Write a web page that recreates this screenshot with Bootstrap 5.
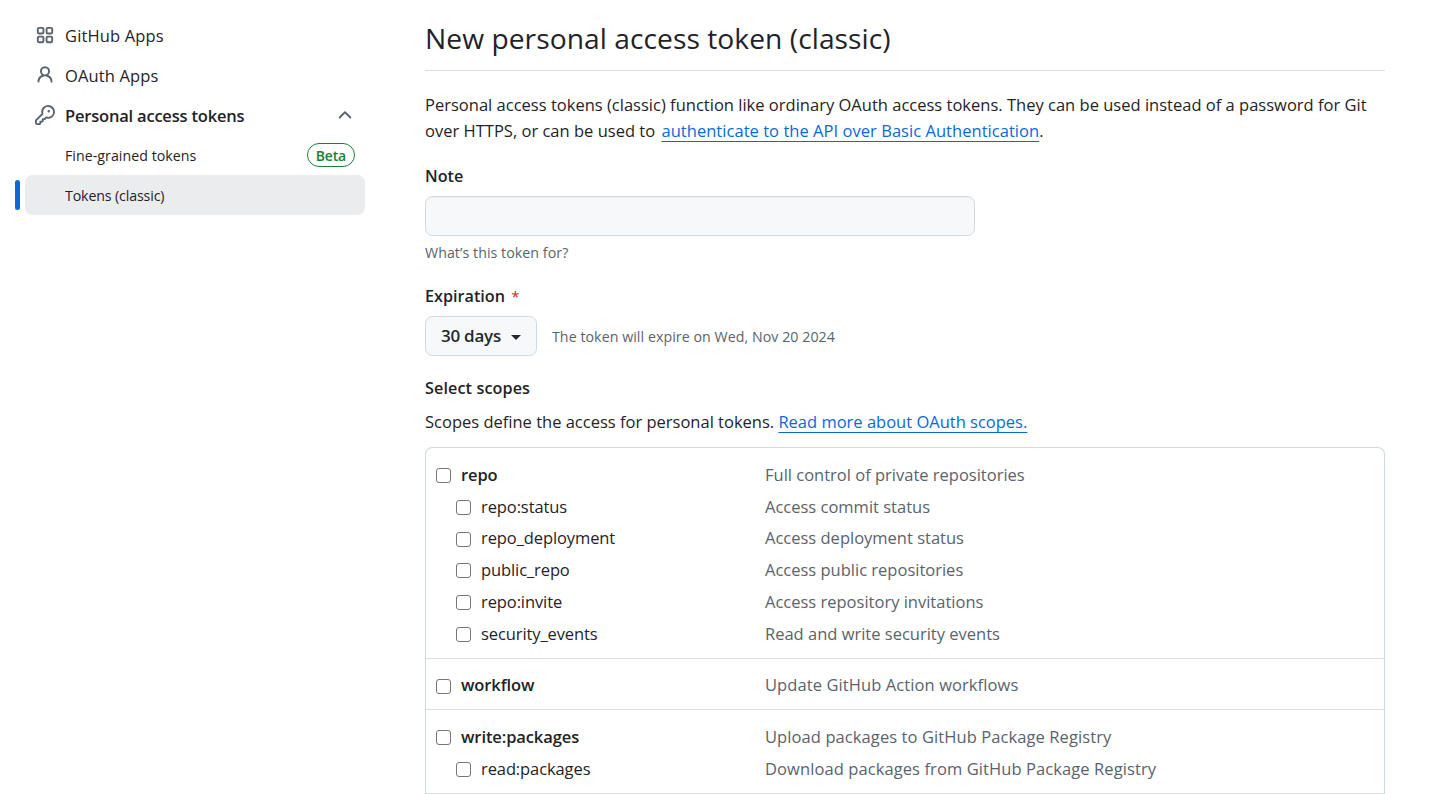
<!DOCTYPE html>
<html lang="en">
<head>
    <meta charset="UTF-8">
    <meta name="viewport" content="width=device-width, initial-scale=1.0">
    <title>New personal access token (classic)</title>
    <!-- Bootstrap 5 CDN -->
    <link href="https://cdn.jsdelivr.net/npm/bootstrap@5.3.0/dist/css/bootstrap.min.css" rel="stylesheet">
    <style>
        body {
            background-color: #ffffff;
            color: #1f2328;
            font-family: "Open Sans", "Noto Sans", sans-serif;
            font-size: 16.5px;
            line-height: 26.25px;
            overflow: hidden;
        }

        .page-wrap {
            padding: 15px 50px 0 25px;
            gap: 60px;
        }

        /* sidebar */
        .side-menu {
            width: 340px;
        }

        .side-menu .nav-link {
            height: 40px;
            padding: 0 10px;
            color: #1f2328;
            border-radius: 7.5px;
            letter-spacing: 0.14px;
        }

        .side-menu .nav-link > span:not(.beta-label) {
            padding-top: 2px;
        }

        .side-menu .fw-semibold {
            letter-spacing: -0.2px;
        }

        .side-menu svg {
            width: 20px;
            height: 20px;
            fill: #59636e;
        }

        .side-menu .nav-link > svg:first-child {
            margin-right: 10px;
        }

        .side-menu .sub-link {
            padding-left: 40px;
            font-size: 14.2px;
            letter-spacing: 0.04px;
        }

        .side-menu .nav-link.active {
            background-color: #ebecee;
            letter-spacing: -0.13px;
        }

        .side-menu .nav-link.active::before {
            content: "";
            position: absolute;
            left: -10px;
            top: 5px;
            width: 5px;
            height: 30px;
            border-radius: 7.5px;
            background-color: #0969da;
        }

        .side-menu .beta-label {
            height: 24px;
            padding: 0 8px;
            border: 1px solid #1a7f37;
            border-radius: 12px;
            color: #1a7f37;
            font-size: 14px;
            line-height: 23px;
        }

        /* main form */
        .page-title {
            height: 56px;
            margin-bottom: 21px;
            border-bottom: 1px solid #d9dee3;
            font-size: 28.2px;
            font-weight: 400;
            line-height: 46px;
            letter-spacing: 0.05px;
        }

        .intro-text {
            letter-spacing: 0.01px;
        }

        .text-link {
            color: #0969da;
            text-decoration: underline;
            text-underline-offset: 4px;
            text-decoration-thickness: 1px;
        }

        .intro-text .text-link {
            margin-left: 2px;
            letter-spacing: 0.04px;
        }

        .field-label {
            margin-bottom: 7px;
            font-weight: 600;
            font-size: 16.2px;
        }

        .note-label {
            margin-top: 18px;
        }

        .expire-label {
            margin-top: 17px;
        }

        .scopes-label {
            margin-top: 19px;
            letter-spacing: 0.1px;
        }

        .required-star {
            margin-left: 2px;
            color: #d1242f;
            font-size: 15px;
            font-weight: 400;
        }

        .note-input {
            width: 550px;
            height: 40px;
            margin-bottom: 4px;
            background-color: #f6f8fa;
            border: 1px solid #d1d9e0;
            border-radius: 7.5px;
            box-shadow: inset 0 1px 0 rgba(31, 35, 40, 0.04);
        }

        .hint-text {
            font-size: 14.2px;
            letter-spacing: 0.06px;
            color: #59636e;
        }

        .expire-hint {
            margin-left: 15px;
            padding-top: 2px;
        }

        .expire-btn {
            width: 112px;
            height: 40px;
            padding: 0 15px 2px;
            background-color: #f6f8fa;
            border: 1px solid #d1d9e0;
            border-radius: 7.5px;
            color: #25292e;
            font-size: 17px;
            font-weight: 600;
            letter-spacing: -0.25px;
        }

        .expire-btn.dropdown-toggle::after {
            margin-top: 4px;
        }

        .scope-box {
            margin-top: 12.3px;
            border: 1px solid #d1d9e0;
            border-bottom: 0;
            border-radius: 7.5px 7.5px 0 0;
        }

        .scope-group {
            padding: 11px 10px 7.8px;
            border-bottom: 1px solid #d9dee3;
        }

        .scope-row {
            height: 31.8px;
        }

        .scope-name {
            width: 329px;
            letter-spacing: -0.1px;
        }

        .scope-row.child .scope-name {
            padding-left: 20px;
        }

        .scope-name .form-check-input {
            width: 15px;
            height: 15px;
            margin: 1px 10px 0 0;
            border: 1px solid #767676;
            border-radius: 3px;
        }

        .scope-desc {
            color: #59636e;
            letter-spacing: 0.09px;
        }

        .scope-group:first-child .scope-desc {
            letter-spacing: 0;
        }
    </style>
</head>
<body>
    <div class="page-wrap d-flex">
        <!-- Sidebar -->
        <nav class="side-menu nav flex-column flex-nowrap flex-shrink-0">
            <a class="nav-link d-flex align-items-center" href="#">
                <svg viewBox="0 0 16 16"><g fill="none" stroke="#59636e" stroke-width="1.5"><rect x="2.25" y="2.25" width="4.5" height="4.5" rx="1"/><rect x="9.25" y="2.25" width="4.5" height="4.5" rx="1"/><rect x="2.25" y="9.25" width="4.5" height="4.5" rx="1"/><rect x="9.25" y="9.25" width="4.5" height="4.5" rx="1"/></g></svg>
                <span>GitHub Apps</span>
            </a>
            <a class="nav-link d-flex align-items-center" href="#">
                <svg viewBox="0 0 16 16"><path d="M10.561 8.073a6.005 6.005 0 0 1 3.432 5.142.75.75 0 1 1-1.498.07 4.5 4.5 0 0 0-8.99 0 .75.75 0 0 1-1.498-.07 6.004 6.004 0 0 1 3.431-5.142 3.999 3.999 0 1 1 5.123 0ZM10.5 5a2.5 2.5 0 1 0-5 0 2.5 2.5 0 0 0 5 0Z"/></svg>
                <span>OAuth Apps</span>
            </a>
            <a class="nav-link d-flex align-items-center" href="#">
                <svg viewBox="0 0 16 16"><path d="M10.5 0a5.499 5.499 0 1 1-1.288 10.848l-.932.932a.749.749 0 0 1-.53.22H7v.75a.749.749 0 0 1-.22.53l-.5.5a.749.749 0 0 1-.53.22H5v.75a.749.749 0 0 1-.22.53l-.5.5a.749.749 0 0 1-.53.22h-2A1.75 1.75 0 0 1 0 14.25v-2c0-.199.079-.389.22-.53l4.932-4.932A5.5 5.5 0 0 1 10.5 0Zm-4 5.5c-.001.431.069.86.205 1.269a.75.75 0 0 1-.181.768L1.5 12.56v1.69c0 .138.112.25.25.25h1.69l.06-.06v-1.19a.75.75 0 0 1 .75-.75h1.19l.06-.06v-1.19a.75.75 0 0 1 .75-.75h1.19l1.023-1.025a.75.75 0 0 1 .768-.18A4 4 0 1 0 6.5 5.5ZM11 6a1 1 0 1 1 0-2 1 1 0 0 1 0 2Z"/></svg>
                <span class="fw-semibold">Personal access tokens</span>
                <svg class="ms-auto" viewBox="0 0 16 16"><path d="M3.22 10.53a.749.749 0 0 1 0-1.06l4.25-4.25a.749.749 0 0 1 1.06 0l4.25 4.25a.749.749 0 1 1-1.06 1.06L8 6.811 4.28 10.53a.749.749 0 0 1-1.06 0Z"/></svg>
            </a>
            <a class="nav-link sub-link d-flex align-items-center" href="#">
                <span>Fine-grained tokens</span>
                <span class="beta-label fw-semibold ms-auto">Beta</span>
            </a>
            <a class="nav-link sub-link active position-relative d-flex align-items-center" href="#">
                <span>Tokens (classic)</span>
            </a>
        </nav>

        <!-- Form -->
        <main class="flex-grow-1">
            <h1 class="page-title">New personal access token (classic)</h1>
            <p class="intro-text mb-0">Personal access tokens (classic) function like ordinary OAuth access tokens. They can be used instead of a password for Git<br>over HTTPS, or can be used to <a class="text-link" href="#">authenticate to the API over Basic Authentication</a>.</p>

            <label class="field-label note-label d-block" for="tokenNote">Note</label>
            <input type="text" id="tokenNote" class="note-input form-control">
            <div class="hint-text">What’s this token for?</div>

            <div class="field-label expire-label">Expiration <span class="required-star">*</span></div>
            <div class="d-flex align-items-center">
                <button type="button" class="expire-btn btn dropdown-toggle d-flex align-items-center justify-content-between">30 days</button>
                <span class="hint-text expire-hint">The token will expire on Wed, Nov 20 2024</span>
            </div>

            <div class="field-label scopes-label">Select scopes</div>
            <p class="mb-0">Scopes define the access for personal tokens. <a class="text-link" href="#">Read more about OAuth scopes.</a></p>

            <div class="scope-box" id="scopeBox"></div>
        </main>
    </div>

    <script src="https://cdn.jsdelivr.net/npm/bootstrap@5.3.0/dist/js/bootstrap.bundle.min.js"></script>
    <script>
        // first entry of each group is the parent scope
        const scopeGroups = [
            [
                ['repo', 'Full control of private repositories'],
                ['repo:status', 'Access commit status'],
                ['repo_deployment', 'Access deployment status'],
                ['public_repo', 'Access public repositories'],
                ['repo:invite', 'Access repository invitations'],
                ['security_events', 'Read and write security events']
            ],
            [
                ['workflow', 'Update GitHub Action workflows']
            ],
            [
                ['write:packages', 'Upload packages to GitHub Package Registry'],
                ['read:packages', 'Download packages from GitHub Package Registry']
            ]
        ];

        document.getElementById('scopeBox').innerHTML = scopeGroups.map(group => `
            <div class="scope-group">
                ${group.map(([name, desc], i) => `
                    <div class="scope-row d-flex align-items-center ${i ? 'child' : ''}">
                        <label class="scope-name d-flex align-items-center ${i ? '' : 'fw-semibold'}">
                            <input class="form-check-input" type="checkbox"><span>${name}</span>
                        </label>
                        <span class="scope-desc">${desc}</span>
                    </div>`).join('')}
            </div>`).join('');
    </script>
</body>
</html>
